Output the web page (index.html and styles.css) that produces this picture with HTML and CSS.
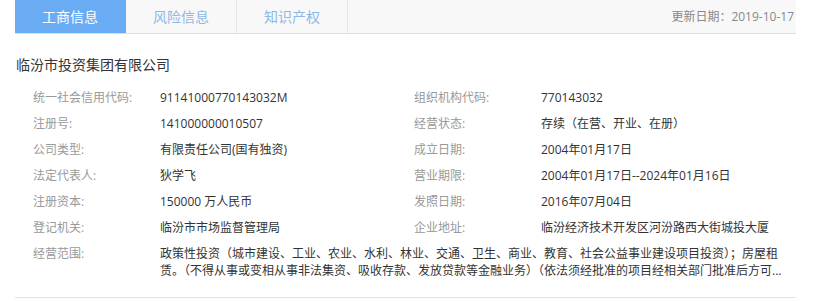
FILE: index.html
```html
<!DOCTYPE html>
<html lang="zh-CN">
<head>
  <meta charset="UTF-8">
  <meta name="viewport" content="width=device-width, initial-scale=1.0">
  <title>工商信息</title>
  <link rel="stylesheet" href="styles.css">
</head>
<body>

  <div class="panel">
    <div class="tabs">
      <div class="tab active">工商信息</div>
      <div class="tab">风险信息</div>
      <div class="tab">知识产权</div>
      <div class="update-date">更新日期：2019-10-17</div>
    </div>

    <h1 class="company">临汾市投资集团有限公司</h1>

    <div class="info-grid">
      <div class="row"><span class="label">统一社会信用代码:</span><span class="value">91141000770143032M</span></div>
      <div class="row"><span class="label">组织机构代码:</span><span class="value">770143032</span></div>
      <div class="row"><span class="label">注册号:</span><span class="value">141000000010507</span></div>
      <div class="row"><span class="label">经营状态:</span><span class="value">存续（在营、开业、在册）</span></div>
      <div class="row"><span class="label">公司类型:</span><span class="value">有限责任公司(国有独资)</span></div>
      <div class="row"><span class="label">成立日期:</span><span class="value">2004年01月17日</span></div>
      <div class="row"><span class="label">法定代表人:</span><span class="value">狄学飞</span></div>
      <div class="row"><span class="label">营业期限:</span><span class="value">2004年01月17日--2024年01月16日</span></div>
      <div class="row"><span class="label">注册资本:</span><span class="value">150000 万人民币</span></div>
      <div class="row"><span class="label">发照日期:</span><span class="value">2016年07月04日</span></div>
      <div class="row"><span class="label">登记机关:</span><span class="value">临汾市市场监督管理局</span></div>
      <div class="row"><span class="label">企业地址:</span><span class="value">临汾经济技术开发区河汾路西大街城投大厦</span></div>
      <div class="row wide">
        <span class="label">经营范围:</span>
        <span class="value scope">政策性投资（城市建设、工业、农业、水利、林业、交通、卫生、商业、教育、社会公益事业建设项目投资）；房屋租赁。（不得从事或变相从事非法集资、吸收存款、发放贷款等金融业务）（依法须经批准的项目经相关部门批准后方可...</span>
      </div>
    </div>
  </div>

</body>
</html>
```

FILE: styles.css
```css
body {
  margin: 0;
  background: #fff;
  font-family: "Open Sans", "Noto Sans CJK SC", sans-serif;
  font-size: 12px;
  color: #333;
}

.panel {
  width: 781px;
  margin-left: 15px;
  border-bottom: 1px solid #e3e3e3;
  height: 298px;
  box-sizing: border-box;
}

/* tab bar */
.tabs {
  display: flex;
  height: 33px;
  background: #f8f8f8;
  border-bottom: 1px solid #dedede;
}

.tab {
  width: 110px;
  line-height: 33px;
  text-align: center;
  font-size: 14px;
  color: #8db7e6;
  border-right: 1px solid #e6e6e6;
}

.tab.active {
  background: #6aacf4;
  color: #fff;
  border-right-color: #6aacf4;
}

.update-date {
  margin-left: auto;
  line-height: 34px;
  padding-right: 2px;
  color: #888;
}

.company {
  margin: 0;
  padding: 21px 0 0 1px;
  font-size: 14px;
  font-weight: normal;
  line-height: 20px;
  color: #333;
}

/* info rows */
.info-grid {
  display: grid;
  grid-template-columns: 381px 381px;
  padding: 10px 0 0 18px;
}

.row {
  display: flex;
  line-height: 26px;
}

.row.wide {
  grid-column: 1 / 3;
}

.label {
  width: 127px;
  flex-shrink: 0;
  color: #999;
}

.value {
  color: #333;
}

.scope {
  width: 628px;
  line-height: 17px;
  padding-top: 4px;
}
```
